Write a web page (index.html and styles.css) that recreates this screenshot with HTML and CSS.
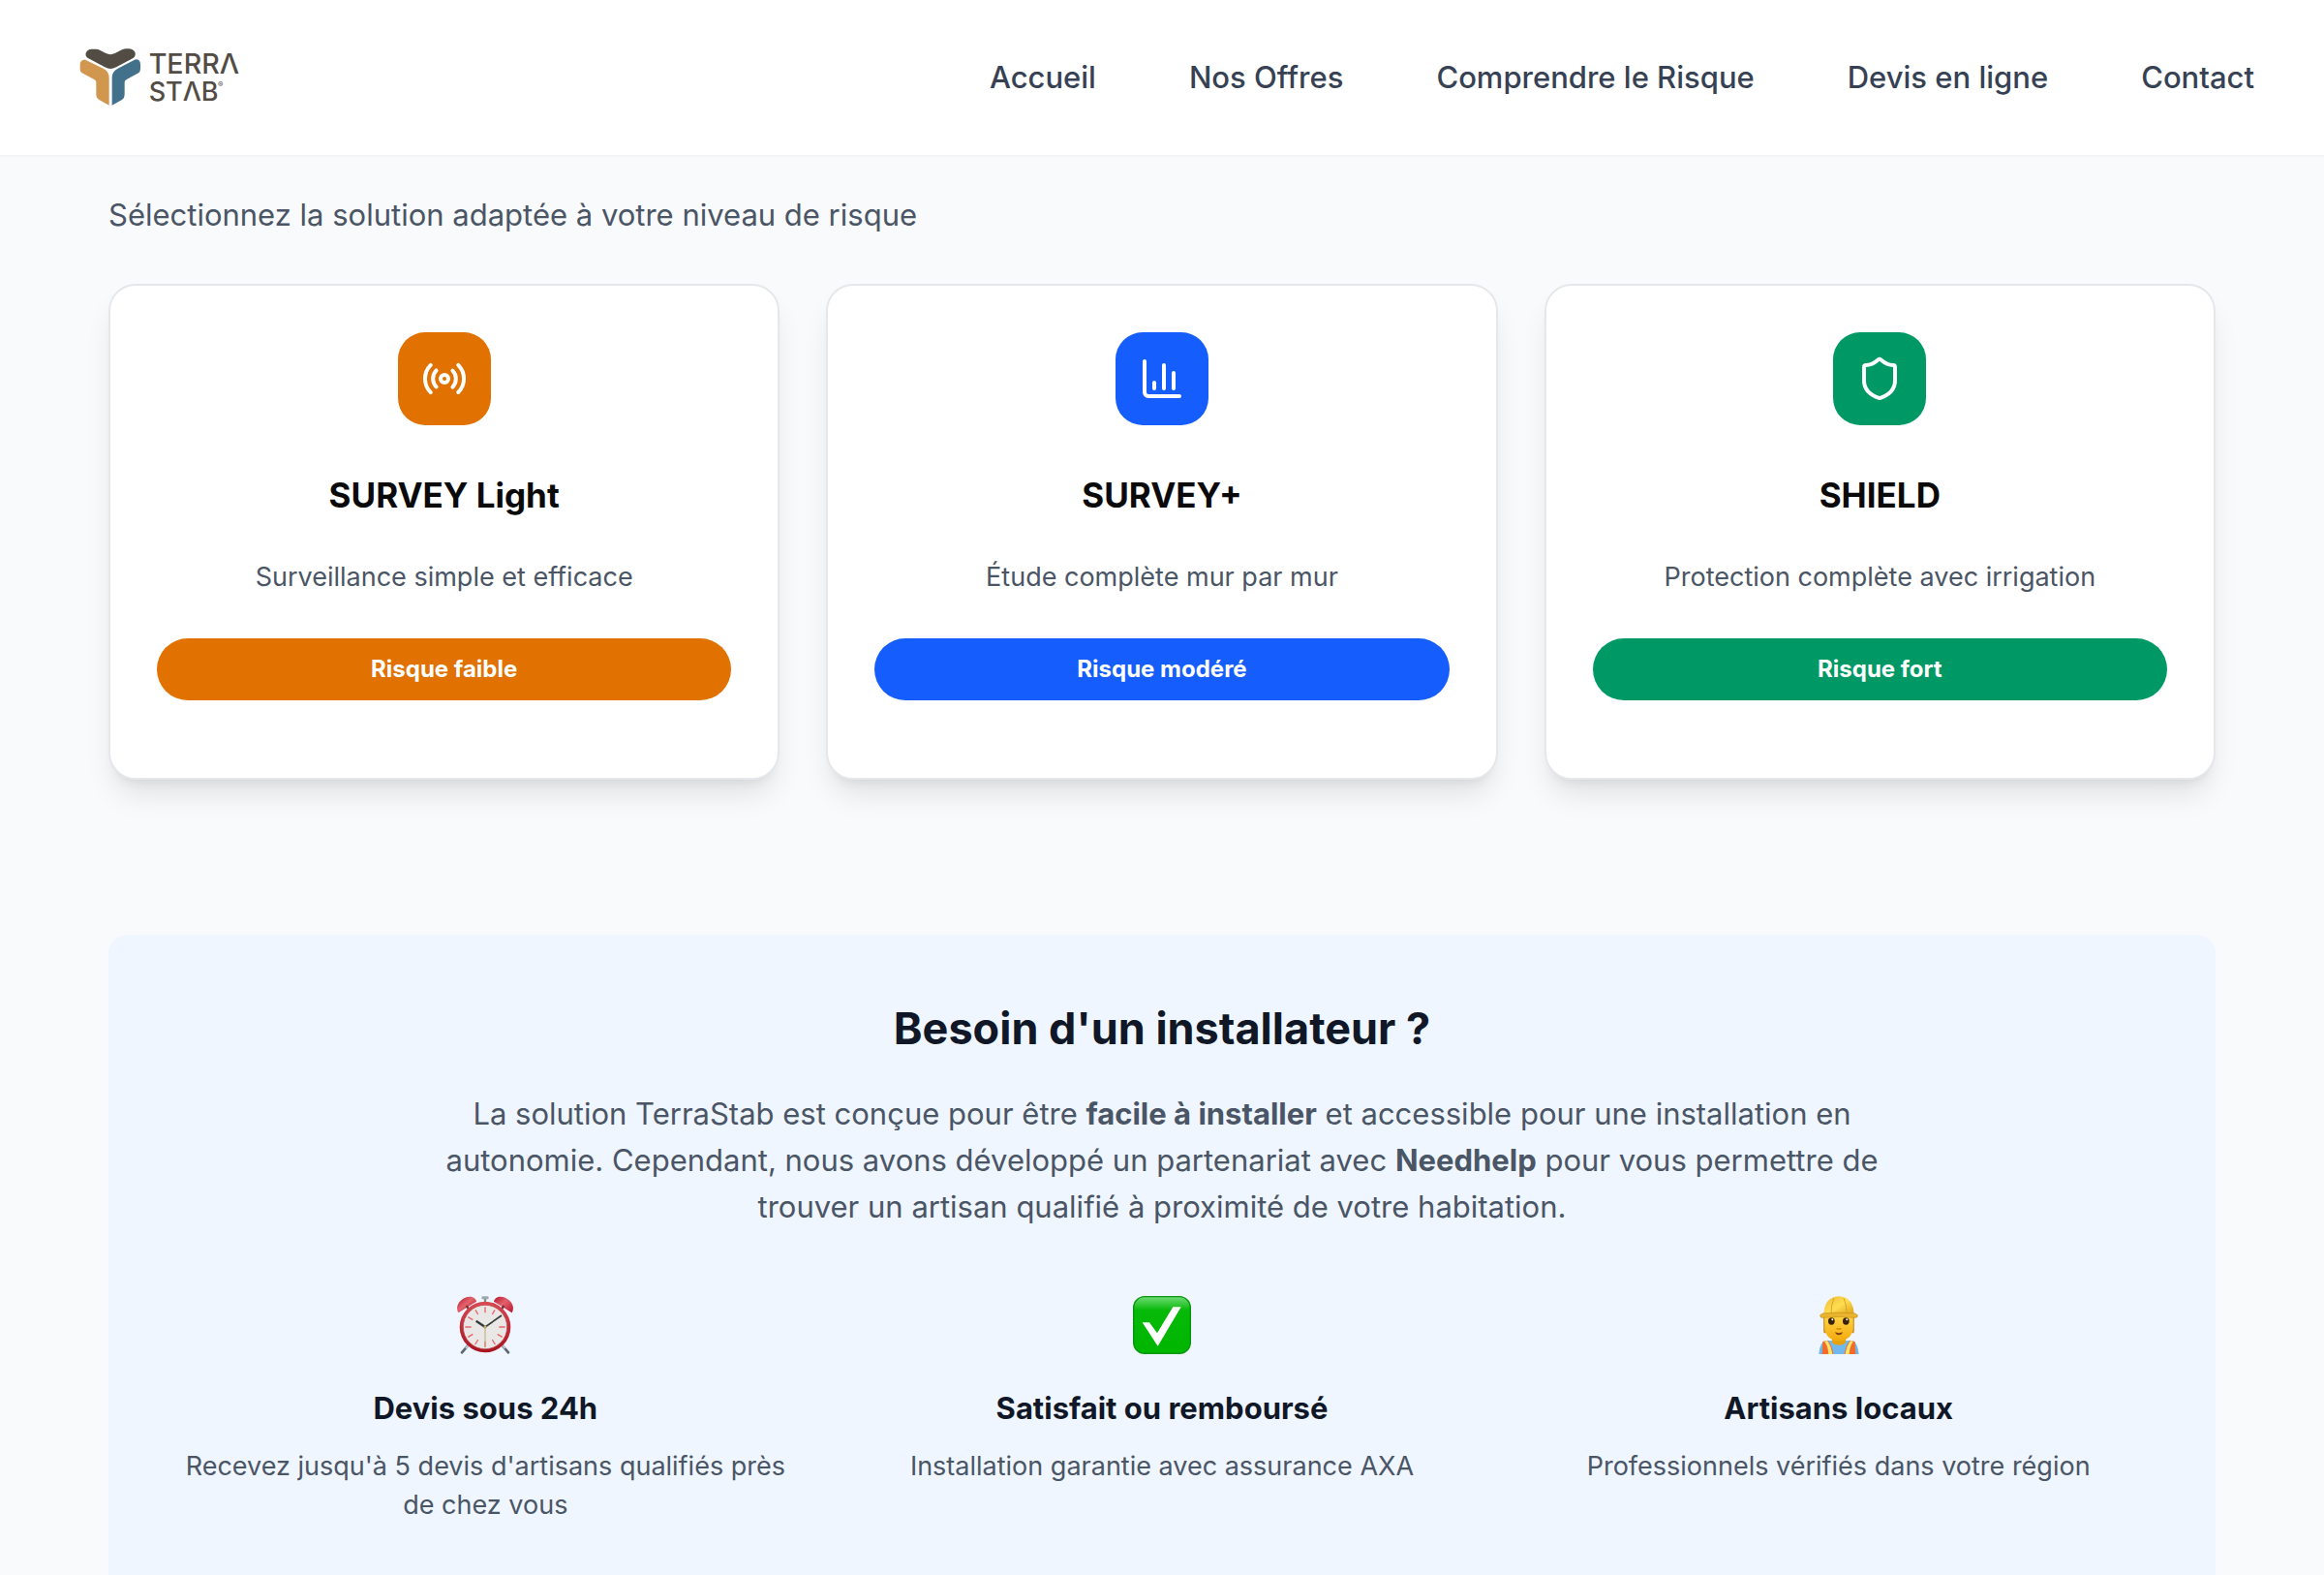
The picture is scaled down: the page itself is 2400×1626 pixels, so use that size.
FILE: index.html
```html
<!DOCTYPE html>
<html lang="fr">
<head>
<meta charset="utf-8">
<meta name="viewport" content="width=device-width, initial-scale=1">
<title>TerraStab – Nos Offres</title>
<link rel="stylesheet" href="styles.css">
</head>
<body>
<header class="header">
  <a class="logo" href="#" aria-label="TerraStab">
    <svg viewBox="60 54 510 192" width="170" height="64">
      <path fill="#524c45" d="M104 62H118Q124 62 129 65L148 75Q162 82 176 75L198 64Q204 61 212 61H220Q236 63 239 74Q241 84 231 91L180 118Q162 128 145 118L94 91Q83 84 86 74Q91 62 104 62Z"/>
      <path fill="#d2974f" d="M68 110Q69 94 84 95L140 122Q158 132 158 150V236L127 219Q118 213 118 203V165Q118 160 113 157L74 136Q68 132 68 124Z"/>
      <path fill="#43718c" d="M255 110Q255 94 240 94L185 122Q167 132 167 150V236L198 219Q206 214 206 203V165Q206 160 211 157L249 136Q255 132 255 124Z"/>
      <g class="logo-text">
        <text x="281" y="138">TERRΛ</text>
        <text class="logo-second" x="281" y="223">STΛB</text>
        <text class="logo-mark" x="495" y="180">®</text>
      </g>
    </svg>
  </a>
  <nav class="nav">
    <a href="#">Accueil</a>
    <a href="#">Nos Offres</a>
    <a href="#">Comprendre le Risque</a>
    <a href="#">Devis en ligne</a>
    <a href="#">Contact</a>
  </nav>
</header>

<main class="main">
  <p class="intro">Sélectionnez la solution adaptée à votre niveau de risque</p>

  <section class="offers">
    <article class="card card-light">
      <div class="card-icon">
        <svg viewBox="0 0 24 24" class="icon"><path d="M4.9 19.1C1 15.2 1 8.8 4.9 4.9M7.8 16.2c-2.3-2.3-2.3-6.1 0-8.5M16.2 7.8c2.3 2.3 2.3 6.1 0 8.5M19.1 4.9C23 8.8 23 15.1 19.1 19"/><circle cx="12" cy="12" r="2"/></svg>
      </div>
      <h3>SURVEY Light</h3>
      <p>Surveillance simple et efficace</p>
      <span class="badge">Risque faible</span>
    </article>
    <article class="card card-plus">
      <div class="card-icon">
        <svg viewBox="0 0 24 24" class="icon"><path d="M3 3v16a2 2 0 0 0 2 2h16M18 17V9M13 17V5M8 17v-3"/></svg>
      </div>
      <h3>SURVEY+</h3>
      <p>Étude complète mur par mur</p>
      <span class="badge">Risque modéré</span>
    </article>
    <article class="card card-shield">
      <div class="card-icon">
        <svg viewBox="0 0 24 24" class="icon"><path d="M20 13c0 5-3.5 7.5-7.66 8.95a1 1 0 0 1-.67-.01C7.5 20.5 4 18 4 13V6a1 1 0 0 1 1-1c2 0 4.5-1.2 6.24-2.72a1.17 1.17 0 0 1 1.52 0C14.51 3.81 17 5 19 5a1 1 0 0 1 1 1z"/></svg>
      </div>
      <h3>SHIELD</h3>
      <p>Protection complète avec irrigation</p>
      <span class="badge">Risque fort</span>
    </article>
  </section>

  <section class="installer">
    <h2>Besoin d'un installateur ?</h2>
    <p class="installer-text">La solution TerraStab est conçue pour être <strong>facile à installer</strong> et accessible pour une installation en autonomie. Cependant, nous avons développé un partenariat avec <strong>Needhelp</strong> pour vous permettre de trouver un artisan qualifié à proximité de votre habitation.</p>
    <div class="features">
      <div class="feature">
        <svg class="emoji" viewBox="0 0 180 180" aria-hidden="true">
          <defs>
            <linearGradient id="bell" x1="0" y1="0" x2="1" y2="1"><stop offset="0" stop-color="#b5142a"/><stop offset=".45" stop-color="#e2626c"/><stop offset="1" stop-color="#b81329"/></linearGradient>
            <linearGradient id="rim" x1="0" y1="0" x2="0" y2="1"><stop offset="0" stop-color="#d94a53"/><stop offset="1" stop-color="#a9121f"/></linearGradient>
          </defs>
          <path d="M38 152L18 175M142 152L162 175" stroke="#5c666d" stroke-width="8" stroke-linecap="round"/>
          <path d="M42 148L30 162M140 148L152 162" stroke="#bac6d0" stroke-width="7"/>
          <path d="M90 4V24" stroke="#808a91" stroke-width="7"/>
          <rect x="79" y="1" width="22" height="9" rx="4" fill="#9ca8b0"/>
          <path d="M7 52C-6 29 16 2 43 2C56 2 62 10 63 17Z" fill="url(#bell)"/>
          <path d="M173 52C186 29 164 2 137 2C124 2 118 10 117 17Z" fill="url(#bell)"/>
          <path d="M32 30l9 13M148 30l-9 13" stroke="#72343a" stroke-width="7"/>
          <circle cx="90" cy="96" r="79" fill="url(#rim)"/>
          <circle cx="90" cy="96" r="68" fill="#e9e8e6" stroke="#b8444a" stroke-width="2"/>
          <path d="M90 34V52M90 140V159M28 96H47M133 96H152M60 43l8 14M112 135l9 15M120 43l-8 14M68 135l-9 15M37 65l15 9M128 118l15 9M37 127l15-9" stroke="#e7656c" stroke-width="4"/>
          <path d="M90 92V159" stroke="#c1a77b" stroke-width="3"/>
          <path d="M90 96L62 77" stroke="#333b3c" stroke-width="7"/>
          <path d="M90 96L141 60" stroke="#333b3c" stroke-width="5"/>
          <circle cx="90" cy="96" r="5" fill="#c4a56e"/>
        </svg>
        <h3>Devis sous 24h</h3>
        <p>Recevez jusqu'à 5 devis d'artisans qualifiés près de chez vous</p>
      </div>
      <div class="feature">
        <svg class="emoji" viewBox="0 0 180 180" aria-hidden="true">
          <defs><linearGradient id="tick" x1="0" y1="0" x2="0" y2="1"><stop offset="0" stop-color="#70db75"/><stop offset=".24" stop-color="#06b908"/><stop offset="1" stop-color="#00b600"/></linearGradient></defs>
          <rect x="2" y="2" width="176" height="176" rx="34" fill="url(#tick)" stroke="#07940f" stroke-width="4"/>
          <path d="M29 82H51L75 115L124 34H149L77 155Z" fill="#fff"/>
        </svg>
        <h3>Satisfait ou remboursé</h3>
        <p>Installation garantie avec assurance AXA</p>
      </div>
      <div class="feature">
        <svg class="emoji" viewBox="0 0 180 180" aria-hidden="true">
          <defs>
            <linearGradient id="helmet" x1="0" y1="0" x2="1" y2="1"><stop offset="0" stop-color="#eeb939"/><stop offset=".5" stop-color="#ffdd50"/><stop offset="1" stop-color="#d99e13"/></linearGradient>
            <linearGradient id="face" x1="0" y1="0" x2="0" y2="1"><stop offset="0" stop-color="#ffd646"/><stop offset="1" stop-color="#f3aa0d"/></linearGradient>
          </defs>
          <path d="M28 180Q30 143 50 138H130Q149 143 152 180Z" fill="#70b8ee"/>
          <path d="M69 124H111V145Q90 160 69 145Z" fill="#e6a10e"/>
          <path d="M40 141L56 137Q70 155 73 180H38Z" fill="#f36b2b"/>
          <path d="M140 141L124 137Q110 155 107 180H142Z" fill="#f36b2b"/>
          <path d="M45 140L54 138Q67 157 70 180H58Q57 156 45 140ZM135 140L126 138Q113 157 110 180H122Q123 156 135 140Z" fill="#ffe46c"/>
          <path d="M45 66V109Q45 114 50 112M135 66V109Q135 114 130 112" stroke="#c98a10" stroke-width="5" fill="none"/>
          <path d="M46 57H134V100Q131 127 109 136Q90 142 71 136Q49 127 46 100Z" fill="url(#face)"/>
          <ellipse cx="67" cy="78" rx="10" ry="11" fill="#3a210a"/><ellipse cx="112" cy="78" rx="10" ry="11" fill="#3a210a"/>
          <circle cx="70" cy="73" r="3" fill="#fff"/><circle cx="115" cy="73" r="3" fill="#fff"/>
          <path d="M83 100Q90 105 97 100" stroke="#d08606" stroke-width="4" fill="none"/>
          <path d="M78 112Q90 117 102 112Q99 121 90 121Q81 121 78 112Z" fill="#80401c"/>
          <path d="M43 60Q44 3 90 1Q136 3 137 60Z" fill="url(#helmet)"/>
          <path d="M66 53Q66 25 75 7M114 53Q114 25 105 7" stroke="#d7a32c" stroke-width="3" fill="none"/>
          <path d="M32 59Q40 51 57 53Q90 49 123 53Q140 51 148 59Q149 68 139 67Q90 61 41 67Q32 69 32 59Z" fill="#eab52e" stroke="#c78d17" stroke-width="2"/>
        </svg>
        <h3>Artisans locaux</h3>
        <p>Professionnels vérifiés dans votre région</p>
      </div>
    </div>
  </section>
</main>
</body>
</html>
```
FILE: styles.css
```css
* { box-sizing: border-box; }

body {
  margin: 0;
  background: #f9fafc;
  color: #4a5565;
  font-family: Inter, "Liberation Sans", sans-serif;
}

h2, h3, p { margin: 0; }

.header {
  display: flex;
  align-items: center;
  justify-content: space-between;
  padding: 48px 72px 48px 80px;
  background: #fff;
  border-bottom: 2px solid #f3f4f6;
}

.logo { display: flex; }
.logo-text { font-size: 86px; font-weight: 500; fill: #524c45; }
.logo-second { font-size: 81px; }
.logo-mark { font-size: 24px; }

.nav { display: flex; gap: 96px; }
.nav a {
  color: #364153;
  font-size: 31px;
  font-weight: 500;
  line-height: 48px;
  text-decoration: none;
}

.main { padding: 36px 112px 0; }
.intro { font-size: 31px; line-height: 48px; }

.offers {
  display: grid;
  grid-template-columns: repeat(3, 1fr);
  gap: 48px;
  margin-top: 47px;
}

.card {
  display: flex;
  flex-direction: column;
  align-items: center;
  padding: 48px 48px 80px;
  background: #fff;
  border: 2px solid #e5e7eb;
  border-radius: 28px;
  box-shadow: 0 20px 30px -6px rgb(0 0 0 / 10%), 0 8px 12px -8px rgb(0 0 0 / 10%);
  text-align: center;
}

.card-light { --accent: #e17100; }
.card-plus { --accent: #155dfc; }
.card-shield { --accent: #009966; }

.card-icon {
  display: grid;
  place-items: center;
  width: 96px;
  height: 96px;
  border-radius: 28px;
  background: var(--accent);
}

.icon {
  width: 48px;
  height: 48px;
  fill: none;
  stroke: #fff;
  stroke-width: 2;
  stroke-linecap: round;
  stroke-linejoin: round;
}

.card h3 {
  margin-top: 52px;
  color: #0a0a0a;
  font-size: 35px;
  font-weight: 700;
  line-height: 40px;
}

.card p {
  margin-top: 45px;
  font-size: 27px;
  line-height: 40px;
}

.badge {
  align-self: stretch;
  margin-top: 43px;
  border-radius: 32px;
  background: var(--accent);
  color: #fff;
  font-size: 24px;
  font-weight: 700;
  line-height: 64px;
}

.installer {
  margin-top: 160px;
  padding: 65px 64px 96px;
  border-radius: 20px;
  background: #eff6ff;
  text-align: center;
}

.installer h2 {
  color: #101828;
  font-size: 45px;
  font-weight: 700;
  line-height: 64px;
}

.installer-text {
  max-width: 1536px;
  margin: 32px auto 0;
  font-size: 31px;
  line-height: 48px;
}

.features {
  display: grid;
  grid-template-columns: repeat(3, 1fr);
  gap: 48px;
  margin-top: 68px;
}

.emoji { display: block; width: 60px; height: 60px; margin: 0 auto; }

.feature h3 {
  margin-top: 36px;
  color: #101828;
  font-size: 31px;
  font-weight: 700;
  line-height: 40px;
}

.feature p {
  margin-top: 20px;
  font-size: 27px;
  line-height: 40px;
}
```
